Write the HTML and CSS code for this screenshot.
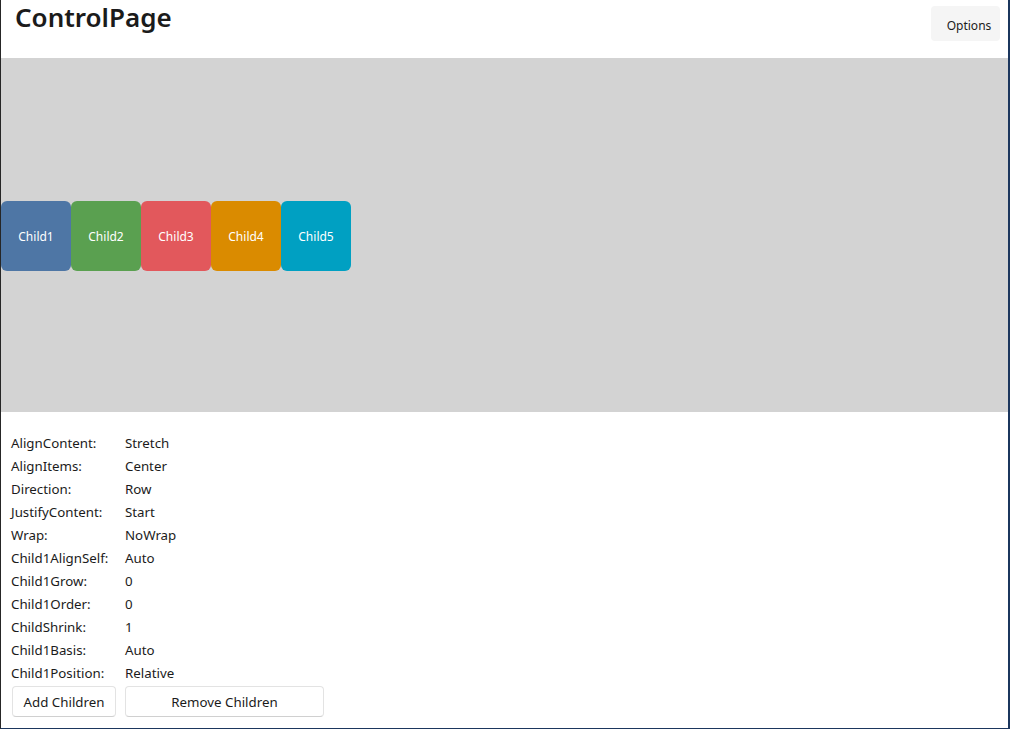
FILE: index.html
```html
<!DOCTYPE html>
<html>
<head>
<meta charset="utf-8">
<link rel="stylesheet" href="styles.css">
</head>
<body>
<div class="window">
  <header class="header">
    <h1 class="title">ControlPage</h1>
    <button class="options">Options</button>
  </header>
  <section class="stage">
    <div class="child c1">Child1</div>
    <div class="child c2">Child2</div>
    <div class="child c3">Child3</div>
    <div class="child c4">Child4</div>
    <div class="child c5">Child5</div>
  </section>
  <section class="panel">
    <div class="props">
      <span>AlignContent:</span><span>Stretch</span>
      <span>AlignItems:</span><span>Center</span>
      <span>Direction:</span><span>Row</span>
      <span>JustifyContent:</span><span>Start</span>
      <span>Wrap:</span><span>NoWrap</span>
      <span>Child1AlignSelf:</span><span>Auto</span>
      <span>Child1Grow:</span><span>0</span>
      <span>Child1Order:</span><span>0</span>
      <span>ChildShrink:</span><span>1</span>
      <span>Child1Basis:</span><span>Auto</span>
      <span>Child1Position:</span><span>Relative</span>
    </div>
    <div class="actions">
      <button class="btn btn-add">Add Children</button>
      <button class="btn btn-remove">Remove Children</button>
    </div>
  </section>
</div>
</body>
</html>
```
FILE: styles.css
```css
html, body {
  margin: 0;
  padding: 0;
  background: #ffffff;
}
.window {
  width: 1010px;
  height: 729px;
  box-sizing: border-box;
  border-left: 1px solid #262626;
  border-right: 2px solid #1b365d;
  border-bottom: 1px solid #1b365d;
  display: flex;
  flex-direction: column;
  font-family: "Noto Sans", "Open Sans", sans-serif;
  color: #1a1a1a;
  overflow: hidden;
}
.header {
  height: 58px;
  box-sizing: border-box;
  padding-top: 2px;
  display: flex;
  justify-content: space-between;
  align-items: flex-start;
  flex-shrink: 0;
}
.title {
  margin: 0;
  padding-left: 14px;
  font-size: 26px;
  font-weight: 600;
  line-height: 31px;
  color: #1b1b1b;
}
.options {
  margin-top: 4px;
  margin-right: 8px;
  width: 69px;
  height: 35px;
  border: none;
  border-radius: 4px;
  background: #f5f5f5;
  font-family: inherit;
  font-size: 12px;
  color: #1b1b1b;
  padding: 3px 0 0 7px;
}
.stage {
  height: 354px;
  flex-shrink: 0;
  background: #d3d3d3;
  display: flex;
  align-items: center;
  padding-top: 2px;
  box-sizing: border-box;
}
.child {
  width: 70px;
  height: 70px;
  border-radius: 6px;
  display: flex;
  align-items: center;
  justify-content: center;
  color: #ffffff;
  font-size: 12px;
  padding-top: 1px;
  box-sizing: border-box;
}
.c1 { background: #4e76a5; }
.c2 { background: #5aa050; }
.c3 { background: #e2585c; }
.c4 { background: #da8b00; }
.c5 { background: #00a0c2; }
.panel {
  padding: 19px 0 0 10px;
}
.props {
  display: grid;
  grid-template-columns: 114px auto;
  grid-auto-rows: 23px;
  align-items: center;
  font-size: 13.3px;
  color: #1b1b1b;
}
.actions {
  display: flex;
  gap: 9px;
  margin-top: 2px;
  padding-left: 1px;
}
.btn {
  height: 31px;
  border: 1px solid #e3e3e3;
  border-bottom-color: #d0d0d0;
  border-radius: 4px;
  background: #ffffff;
  font-family: inherit;
  font-size: 13.3px;
  color: #1b1b1b;
}
.btn-add { width: 104px; }
.btn-remove { width: 199px; }
```
